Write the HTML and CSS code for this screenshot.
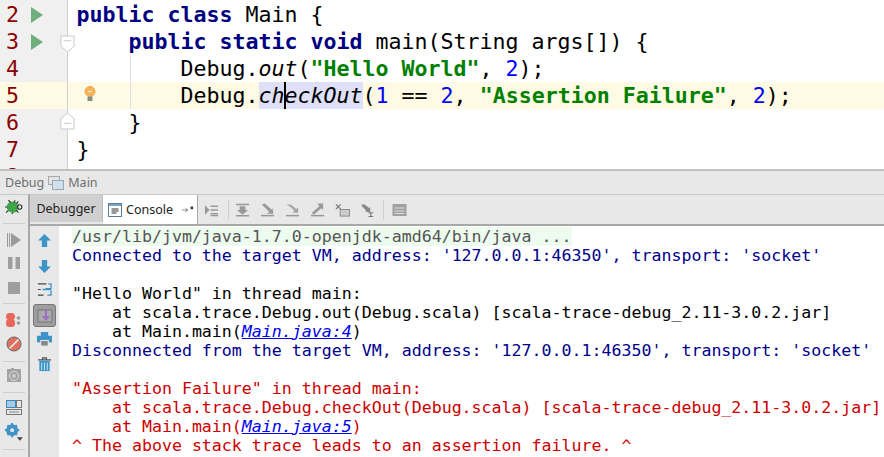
FILE: index.html
```html
<!DOCTYPE html>
<html lang="en">
<head>
<meta charset="utf-8">
<title>Debug Main</title>
<link rel="stylesheet" href="styles.css">
</head>
<body>
<section class="editor">
  <div class="gutter">
    <div class="gl"><span class="num">2</span><svg class="run" viewBox="0 0 12 16"><path d="M0 0L12 8L0 16Z"/></svg></div>
    <div class="gl"><span class="num">3</span><svg class="run" viewBox="0 0 12 16"><path d="M0 0L12 8L0 16Z"/></svg><svg class="fold" viewBox="0 0 16 19"><path d="M1 1H15V12L8 18L1 12Z"/><path d="M4 6H12"/></svg></div>
    <div class="gl"><span class="num">4</span></div>
    <div class="gl cur"><span class="num">5</span></div>
    <div class="gl"><span class="num">6</span><svg class="fold up" viewBox="0 0 16 19"><path d="M1 18H15V7L8 1L1 7Z"/><path d="M4 12H12"/></svg></div>
    <div class="gl"><span class="num">7</span></div>
    <div class="gl"><span class="num">8</span></div>
  </div>
  <div class="code">
    <div class="cl"><b>public class </b>Main {</div>
    <div class="cl">    <b>public static void </b>main(String args[]) {</div>
    <div class="cl">        Debug.<i>out</i>(<b class="str">"Hello World"</b>, <span class="n">2</span>);</div>
    <div class="cl curline"><svg class="bulb" viewBox="0 0 12 16"><circle cx="6" cy="5.500" r="5" fill="#f4b45a" stroke="#e8a84c"/><path d="M4 5l1 1 1-1 1 1 1-1" fill="none" stroke="#fff" stroke-width=".7"/><rect x="3.500" y="10.500" width="5" height="4.500" fill="#8a8a8a"/></svg>        Debug.<i class="hl">ch<span class="caret"></span>eckOut</i>(<span class="n">1</span> == <span class="n">2</span>, <b class="str">"Assertion Failure"</b>, <span class="n">2</span>);</div>
    <div class="cl">    }</div>
    <div class="cl">}</div>
    <div class="guide"></div>
  </div>
</section>

<header class="titlebar">
  <span>Debug</span>
  <svg class="ti" viewBox="0 0 16 14"><rect x=".5" y=".5" width="11" height="8" fill="#e4e4e4" stroke="#a9a9a9"/><rect x="4.500" y="4.500" width="11" height="9" fill="#cfe0ee" stroke="#9aa7b0"/></svg>
  <span>Main</span>
</header>

<section class="panel">
  <aside class="rail">
    <svg class="ic16" viewBox="0 0 16 14"><ellipse cx="7" cy="7" rx="5.500" ry="5" fill="#3ea648"/><path d="M10 3.500a4 4 0 0 1 0 7a5 5 0 0 0 0-7Z" fill="#fff"/><path d="M3 1l2 2M9 1L8 3M0 7h2M1 12l2-2M6 13l1-1M12 2l-2 2M12 12l-2-2" stroke="#333" stroke-width="1"/><circle cx="13" cy="7" r="2" fill="none" stroke="#333"/></svg>
    <hr class="sep s1">
    <svg class="ri r-play" viewBox="0 0 16 16"><path d="M1 1h1v14H1zM3 1h1v14H3z" fill="#9a9a9a"/><path d="M5 1L15 8L5 15Z" fill="#9a9a9a"/></svg>
    <svg class="ri r-pause" viewBox="0 0 16 16"><rect x="2" y="2" width="4.500" height="12" fill="#9e9e9e"/><rect x="9.500" y="2" width="4.500" height="12" fill="#9e9e9e"/></svg>
    <svg class="ri r-stop" viewBox="0 0 16 16"><rect x="2" y="2" width="12" height="12" fill="#9e9e9e"/></svg>
    <hr class="sep s2">
    <svg class="ri r-break" viewBox="0 0 16 16"><rect x="0" y="1" width="9" height="7" rx="3.500" fill="#e9675a"/><rect x="0" y="7" width="9" height="8" rx="3.500" fill="#e9675a"/><circle cx="12.500" cy="6" r="1.800" fill="#999"/><circle cx="12.500" cy="11" r="1.800" fill="#999"/></svg>
    <svg class="ri r-mute" viewBox="0 0 16 16"><circle cx="8" cy="8" r="7" fill="#e0705f" stroke="#666"/><path d="M3.500 12.500L12.500 3.500" stroke="#eee" stroke-width="1.600"/></svg>
    <hr class="sep s3">
    <svg class="ri r-camera" viewBox="0 0 16 16"><path d="M1 2h4V1h3v1h7v13H1Z" fill="#a3a3a3"/><circle cx="8" cy="9" r="4.500" fill="none" stroke="#ddd"/><circle cx="8" cy="9" r="2" fill="#ccc"/></svg>
    <hr class="sep s4">
    <svg class="ri r-layout" viewBox="0 0 16 16"><rect x=".5" y="1.500" width="9" height="7" fill="#a8cbe4" stroke="#3f88bd"/><rect x="10.500" y="1.500" width="5" height="7" fill="none" stroke="#777"/><rect x=".5" y="10.500" width="15" height="5" fill="none" stroke="#777"/><path d="M3 13h10" stroke="#888"/></svg>
    <svg class="r-gear" viewBox="0 0 16 16"><circle cx="6" cy="6" r="3.500" fill="none" stroke="#3f93c7" stroke-width="3"/><path d="M6 0v12M0 6h12M2 2l8 8M10 2l-8 8" stroke="#3f93c7" stroke-width="1.800"/><circle cx="6" cy="6" r="1.600" fill="#eaeaea"/><path d="M10 12h5l-2.500 3Z" fill="#444"/></svg>
    <hr class="sep s5">
  </aside>
  <div class="main">
    <div class="tabs">
      <div class="tab off">Debugger</div>
      <div class="tab on">
        <svg class="ci" viewBox="0 0 14 14"><rect x=".5" y=".5" width="13" height="13" fill="#fff" stroke="#5a7f9d"/><rect x="1" y="1" width="12" height="2" fill="#7aa6c6"/><path d="M3.500 6h7M3.500 8h7M3.500 10h5" stroke="#333"/></svg>
        <span>Console</span>
        <svg class="pin" viewBox="0 0 14 8"><path d="M0 4h6M4 2l3 2-3 2" fill="none" stroke="#777"/><rect x="10" y="0" width="3" height="3" fill="#333"/></svg>
      </div>
      <div class="tools">
        <svg class="ti1" viewBox="0 0 16 14"><path d="M1 2l5 5-5 5Z" fill="#999"/><path d="M7 3h8M7 7h8M7 11h8M7 13h8" stroke="#999" stroke-width="1.400"/></svg>
        <i class="tsep ts1"></i>
        <svg class="ti1" viewBox="0 0 16 14"><path d="M1 1h14M1 13h14" stroke="#999" stroke-width="1.600"/><path d="M5 3h6v4h3l-6 5-6-5h3Z" fill="#999"/></svg>
        <svg class="ti1" viewBox="0 0 16 14"><path d="M1 13h14" stroke="#999" stroke-width="1.600"/><path d="M2 1l3-1 8 7 1-3v7H7l3-2Z" fill="#999"/></svg>
        <svg class="ti1" viewBox="0 0 16 14"><path d="M1 13h14" stroke="#999" stroke-width="1.600"/><path d="M1 1h5l6 5 2-2v6H8l2-2-5-5Z" fill="#a5a5a5"/></svg>
        <svg class="ti1" viewBox="0 0 16 14"><path d="M1 13h14" stroke="#999" stroke-width="1.600"/><path d="M14 0v7l-2-2-8 7-2-2 8-7-2-3Z" fill="#999"/></svg>
        <svg class="ti1" viewBox="0 0 16 14"><path d="M1 1l5 5M6 1L1 6" stroke="#777" stroke-width="1.300"/><rect x="5.500" y="6.500" width="10" height="7" fill="#ccc" stroke="#888"/></svg>
        <svg class="ti1" viewBox="0 0 16 14"><path d="M1 1h4l5 4 1-2v6H5l2-1-4-4Z" fill="#888"/><path d="M9 10h5M9 14h5M11.500 10v4" stroke="#666"/></svg>
        <i class="tsep ts2"></i>
        <svg class="ti1" viewBox="0 0 14 14"><rect x="0" y="1" width="14" height="12" fill="#a0a0a0"/><path d="M2 5h10M2 8h10M2 10.500h10" stroke="#ddd"/></svg>
      </div>
    </div>
    <div class="body">
      <div class="side">
        <svg class="si" viewBox="0 0 14 14"><path d="M7 1l6 6H9.500v6h-5V7H1Z" fill="#3c94c9"/></svg>
        <svg class="si s-down" viewBox="0 0 14 14"><path d="M7 13l6-6H9.500V1h-5v6H1Z" fill="#3c94c9"/></svg>
        <svg class="si s-wrap" viewBox="0 0 16 16"><path d="M1 2h9M1 14h6M1 8h3" stroke="#444" stroke-width="1.200"/><path d="M12 2h3v5h-6M6 8h9M11 14h4V9" fill="none" stroke="#3c94c9" stroke-width="1.400"/></svg>
        <div class="active"><svg class="si0" viewBox="0 0 16 16"><rect x="1" y="2" width="14" height="12" fill="#aaa" stroke="#777"/><path d="M10 1v7h3l-4 5-4-5h3V1Z" fill="#9b6fc4"/></svg></div>
        <svg class="si s-print" viewBox="0 0 16 16"><rect x="4" y="0" width="8" height="5" fill="#3c94c9"/><rect x="0" y="4" width="16" height="7" fill="#3c94c9"/><rect x="4" y="9" width="8" height="6" fill="#888" stroke="#eee"/></svg>
        <svg class="si s-trash" viewBox="0 0 16 16"><path d="M1 3h14M6 3V1h4v2" stroke="#555" fill="none" stroke-width="1.300"/><path d="M2.500 4h11v11h-11Z" fill="#3c94c9"/><path d="M5 6v8M8 6v8M11 6v8" stroke="#cfe5f2"/></svg>
      </div>
      <div class="console">
        <div class="ln"><span class="green">/usr/lib/jvm/java-1.7.0-openjdk-amd64/bin/java ...</span></div>
        <div class="ln blue">Connected to the target VM, address: '127.0.0.1:46350', transport: 'socket'</div>
        <div class="ln">&nbsp;</div>
        <div class="ln">"Hello World" in thread main:</div>
        <div class="ln">    at scala.trace.Debug.out(Debug.scala) [scala-trace-debug_2.11-3.0.2.jar]</div>
        <div class="ln">    at Main.main(<a>Main.java:4</a>)</div>
        <div class="ln blue">Disconnected from the target VM, address: '127.0.0.1:46350', transport: 'socket'</div>
        <div class="ln">&nbsp;</div>
        <div class="ln red">"Assertion Failure" in thread main:</div>
        <div class="ln red">    at scala.trace.Debug.checkOut(Debug.scala) [scala-trace-debug_2.11-3.0.2.jar]</div>
        <div class="ln red">    at Main.main(<a>Main.java:5</a>)</div>
        <div class="ln red">^ The above stack trace leads to an assertion failure. ^</div>
      </div>
    </div>
  </div>
</section>
</body>
</html>
```
FILE: styles.css
```css
* { box-sizing: border-box; }
html, body { margin: 0; padding: 0; }
body { width: 884px; height: 457px; overflow: hidden; background: #fff; font-family: "Noto Sans", sans-serif; }

.editor { display: flex; height: 169px; overflow: hidden; background: #fff; }
.gutter { width: 68px; flex: none; background: #f0f0f0; border-right: 1px solid #d0d0d0; padding-top: 1px; }
.gl { position: relative; height: 27px; display: flex; align-items: center; padding-left: 6px; }
.gl.cur { background: #fffae3; }
.num { font: 21.600px/27px "DejaVu Sans Mono", monospace; color: #8b0000; }
.run { position: absolute; left: 31px; top: 6px; width: 12px; height: 16px; fill: #6fae7d; }
.fold { position: absolute; left: 60px; top: 7px; width: 15px; height: 18px; z-index: 2; fill: #fff; stroke: #c8c8c8; }
.fold.up { top: 3px; }

.code { position: relative; flex: 1; padding: 1px 0 0 8.500px; font: 21.600px/27px "DejaVu Sans Mono", monospace; color: #000; }
.cl { height: 27px; position: relative; white-space: pre; }
.cl b { color: #000080; font-weight: 700; }
.cl b.str { color: #008000; }
.cl .n { color: #0000ff; }
.curline { background: #fffae3; margin-left: -8.500px; padding-left: 8.500px; }
.hl { background: #dfe0f8; position: relative; display: inline-block; }
.caret { position: absolute; left: 25.500px; top: 0; width: 2px; height: 27px; background: #000; }
.bulb { position: absolute; left: 16px; top: 4px; width: 12px; height: 16px; }
.guide { position: absolute; left: 62px; top: 55px; height: 54px; width: 1px; background: #e0e0e0; }

.titlebar { height: 25px; display: flex; align-items: center; gap: 4px; padding-left: 5px; background: #e8e8e8; border-top: 2px solid #c0c0c0; font-size: 12.500px; color: #6f6f6f; }
.ti { width: 16px; height: 14px; }

.panel { display: flex; height: 263px; background: #e8e8e8; }
.rail { width: 30px; flex: none; border-right: 2px solid #a8a8a8; border-top: 1px solid #c8c8c8; display: flex; flex-direction: column; align-items: center; padding-top: 4px; }
.ic16 { width: 18px; height: 16px; flex: none; }
.sep { width: 22px; height: 1px; margin: 0; border: 0; background: #cfcfcf; flex: none; }
.s1 { margin-top: 8px; }
.s2 { margin-top: 7px; }
.s3 { margin-top: 9px; }
.s4 { margin-top: 9px; }
.s5 { margin-top: 7px; }
.ri { width: 16px; height: 16px; flex: none; }
.r-play { margin-top: 8px; }
.r-pause { margin-top: 7px; }
.r-stop { margin-top: 9px; }
.r-break { margin-top: 8px; }
.r-mute { margin-top: 8px; }
.r-camera { margin-top: 5px; }
.r-layout { margin-top: 6px; }
.r-gear { width: 19px; height: 19px; flex: none; margin-top: 8px; }

.main { flex: 1; min-width: 0; display: flex; flex-direction: column; }
.tabs { height: 32px; display: flex; border-bottom: 2px solid #a8a8a8; border-top: 1px solid #c8c8c8; flex: none; }
.tab { display: flex; align-items: center; font-size: 12.500px; color: #222; }
.tab.off { width: 73px; background: #d0d0d0; justify-content: center; border-right: 1px solid #bbb; margin-bottom: 2px; }
.tab.on { width: 95px; background: #fff; padding-left: 5px; gap: 4px; border-right: 1px solid #a8a8a8; }
.ci { width: 14px; height: 14px; flex: none; }
.pin { width: 12px; height: 8px; margin-left: 5px; flex: none; }
.tools { flex: 1; display: flex; align-items: center; gap: 10px; padding-left: 6px; }
.ti1 { width: 15px; height: 14px; flex: none; }
.tsep { width: 1px; height: 20px; background: #cfcfcf; flex: none; }
.ts1 { margin: 0 -4px 0 -1px; }
.ts2 { margin: 0 -2px 0 -2px; }

.body { flex: 1; display: flex; min-height: 0; }
.side { width: 29px; flex: none; display: flex; flex-direction: column; align-items: center; padding-top: 7px; }
.si { width: 15px; height: 15px; flex: none; }
.s-down { margin-top: 11px; }
.s-wrap { margin-top: 8px; }
.s-print { margin-top: 5px; }
.s-trash { margin-top: 10px; }
.si0 { width: 16px; height: 16px; }
.active { width: 23px; height: 23px; background: #9e9e9e; border: 1px solid #777; border-radius: 3px; display: flex; align-items: center; justify-content: center; margin-top: 7px; flex: none; }
.console { flex: 1; background: #fff; padding: 1px 0 0 13px; font: 16.600px/19px "DejaVu Sans Mono", monospace; color: #000; overflow: hidden; }
.ln { height: 19px; white-space: pre; }
.green { background: #edfcee; color: #555; }
.blue { color: #00008b; }
.red { color: #cc0000; }
.ln a { color: #0000ee; font-style: italic; text-decoration: underline; }
```
